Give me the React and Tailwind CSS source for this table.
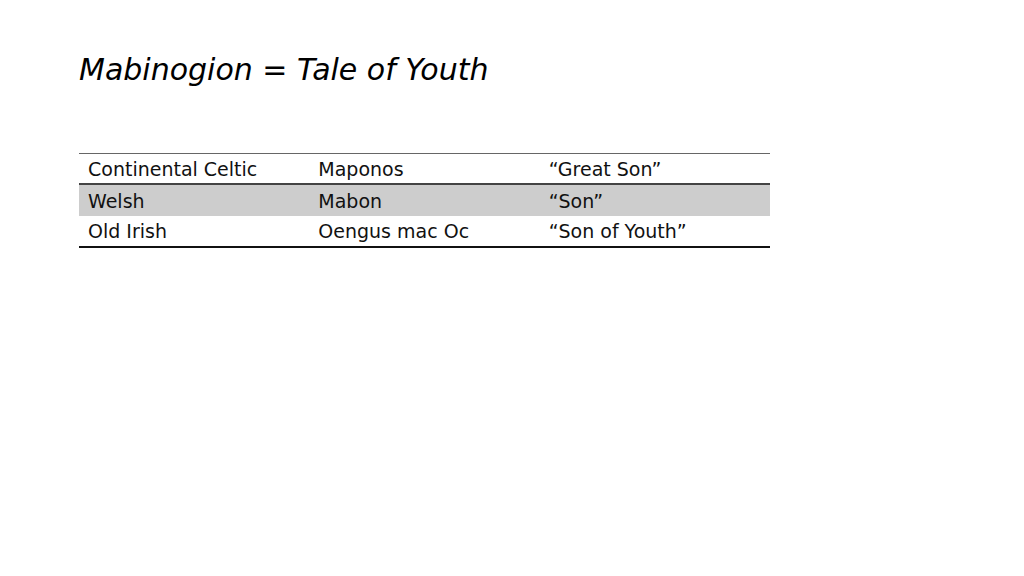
export default function App() {
  const rows = [
    ["Continental Celtic", "Maponos", "\u201cGreat Son\u201d"],
    ["Welsh", "Mabon", "\u201cSon\u201d"],
    ["Old Irish", "Oengus mac Oc", "\u201cSon of Youth\u201d"],
  ];
  return (
    <div className="w-[1024px] h-[576px] bg-white overflow-hidden" style={{ fontFamily: '"DejaVu Sans", Verdana, sans-serif' }}>
      <div className="pl-[79px] pt-[50px]">
        <h1 className="italic text-[30px] leading-[40px] text-black">Mabinogion = Tale of Youth</h1>
      </div>
      <div className="ml-[79px] mt-[63px] w-[691px] border-t border-[#666] border-b-2 border-b-[#111]">
        {rows.map((r, i) => (
          <div
            key={i}
            className={
              "grid grid-cols-3 items-center text-[19px] text-[#111] " +
              (i === 1 ? "bg-[#cdcdcd] h-[31px] " : "") +
              (i === 0 ? "border-b-2 border-[#444] h-[31px]" : "") +
              (i === 2 ? "h-[30px]" : "")
            }
          >
            {r.map((c, j) => (
              <div key={j} className="pl-[9px] pt-[1px]">{c}</div>
            ))}
          </div>
        ))}
      </div>
    </div>
  );
}
